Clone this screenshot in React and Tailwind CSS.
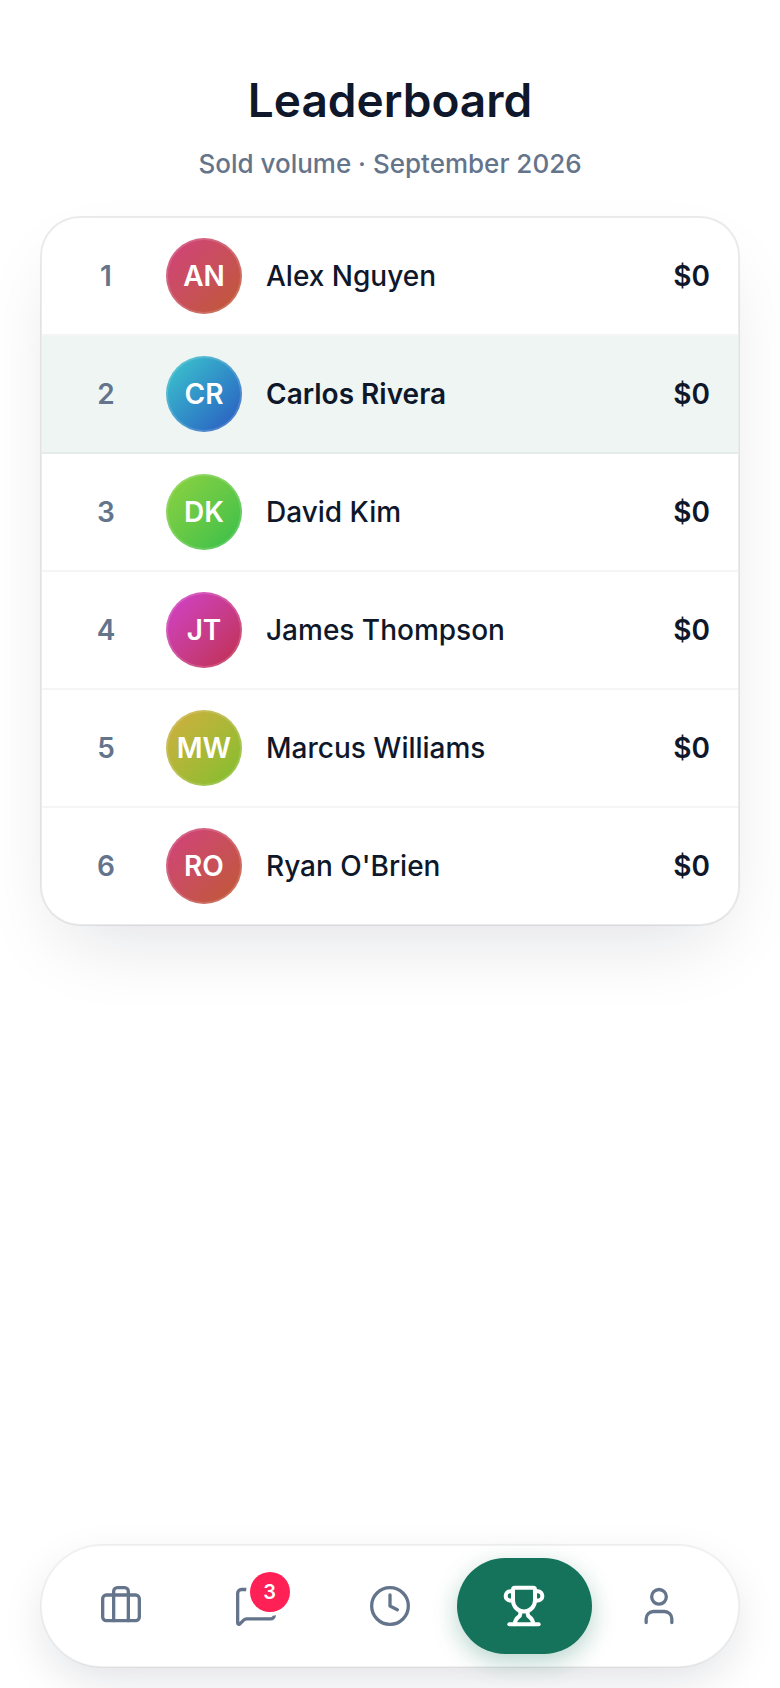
import { Briefcase, Clock, MessageSquare, Trophy, User } from "lucide-react";

const agents = [
    { name: "Alex Nguyen", initials: "AN", volume: "$0", gradient: "from-[#d2407d] to-[#bf592d]" },
    { name: "Carlos Rivera", initials: "CR", volume: "$0", gradient: "from-[#40c9cc] to-[#2d55bf]", isMe: true },
    { name: "David Kim", initials: "DK", volume: "$0", gradient: "from-[#8cd240] to-[#2dbf4a]" },
    { name: "James Thompson", initials: "JT", volume: "$0", gradient: "from-[#d240cd] to-[#bf2d4a]" },
    { name: "Marcus Williams", initials: "MW", volume: "$0", gradient: "from-[#d2ae40] to-[#7bbf2d]" },
    { name: "Ryan O'Brien", initials: "RO", volume: "$0", gradient: "from-[#d2407d] to-[#bf592d]" },
];

const tabs = [
    { label: "Jobs", Icon: Briefcase },
    { label: "Messages", Icon: MessageSquare, badge: 3 },
    { label: "History", Icon: Clock },
    { label: "Leaderboard", Icon: Trophy, active: true },
    { label: "Profile", Icon: User },
];

const Row = ({ rank, agent }) => (
    <li className={`flex items-center gap-6 px-7 py-5 border-b-2 border-black/4 last:border-b-0 ${agent.isMe ? "bg-[#eef5f3]" : ""}`}>
        <span className="w-18 text-center text-[28px] font-semibold text-[#64748b]">{rank}</span>
        <span className={`flex h-19 w-19 shrink-0 items-center justify-center rounded-full bg-linear-135 text-[28px] font-semibold text-white inset-ring-2 inset-ring-white/15 ${agent.gradient}`}>
            {agent.initials}
        </span>
        <span className={`flex-1 truncate text-[28px] ${agent.isMe ? "font-semibold" : "font-medium"}`}>{agent.name}</span>
        <span className="text-[28px] font-semibold">{agent.volume}</span>
    </li>
);

const Tab = ({ label, Icon, badge, active }) => (
    <button
        aria-label={label}
        className={`flex h-24 flex-1 items-center justify-center rounded-full ${active ? "bg-[#14735a] text-white shadow-[0_8px_24px_rgba(20,115,90,0.3)]" : "text-[#64748b]"}`}
    >
        <span className="relative">
            <Icon size={44} strokeWidth={active ? 2.2 : 1.8} />
            {badge && (
                <span className="absolute -top-3 -right-3 flex h-10 w-10 items-center justify-center rounded-full bg-[#ff2056] text-[20px] font-semibold text-white ring-4 ring-white">
                    {badge}
                </span>
            )}
        </span>
    </button>
);

const App = () => {
    return (
        <div className="flex min-h-screen flex-col bg-white px-10 pt-18 pb-5 font-['Inter','Liberation_Sans',sans-serif] text-[#0f172a]">
            <header className="text-center">
                <h1 className="text-[46px] leading-14 font-semibold">Leaderboard</h1>
                <p className="mt-4 text-[26px] leading-10 font-medium text-[#64748b]">Sold volume · September 2026</p>
            </header>
            <ul className="mt-8 overflow-hidden rounded-[40px] border-2 border-black/8 bg-white bg-clip-padding shadow-[0_32px_80px_-24px_rgba(15,23,42,0.14)]">
                {agents.map((agent, i) => (
                    <Row key={agent.name} rank={i + 1} agent={agent} />
                ))}
            </ul>
            <nav className="mt-auto flex rounded-full border-2 border-black/5 bg-white bg-clip-padding p-3 shadow-[0_16px_48px_-8px_rgba(15,23,42,0.14)]">
                {tabs.map((tab) => (
                    <Tab key={tab.label} {...tab} />
                ))}
            </nav>
        </div>
    );
};

export default App;
